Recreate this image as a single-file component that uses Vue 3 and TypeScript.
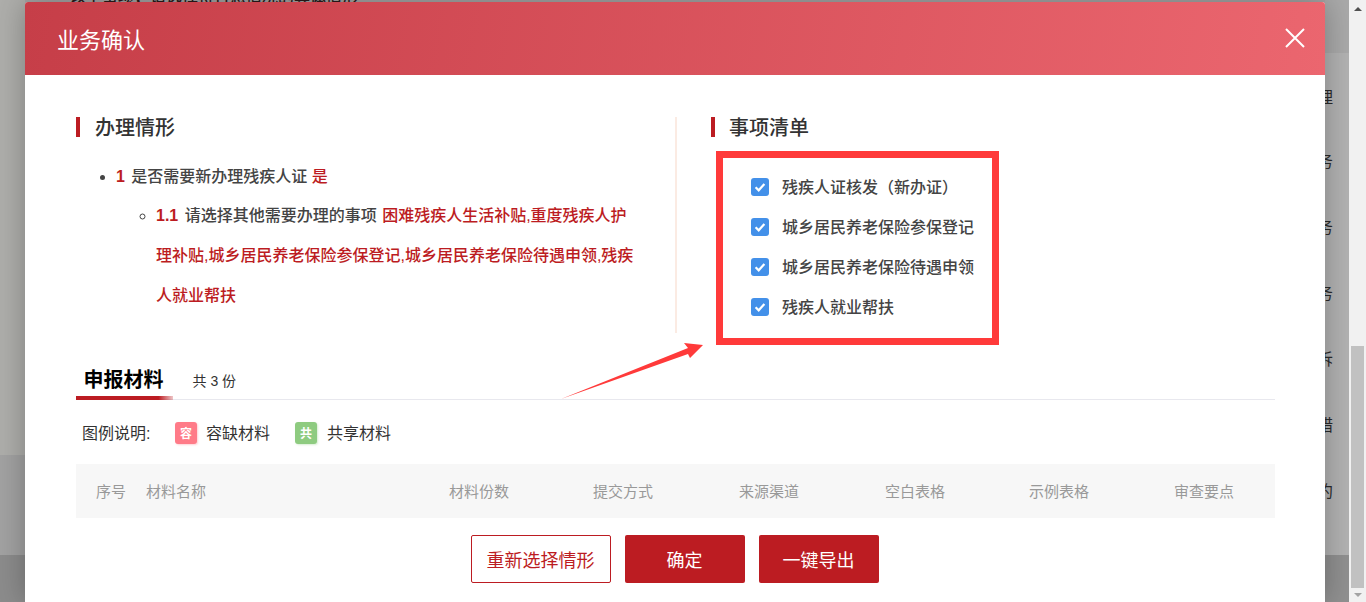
<script setup lang="ts">
const subAnswer = '困难残疾人生活补贴,重度残疾人护理补贴,城乡居民养老保险参保登记,城乡居民养老保险待遇申领,残疾人就业帮扶'
const items: string[] = ['残疾人证核发（新办证）', '城乡居民养老保险参保登记', '城乡居民养老保险待遇申领', '残疾人就业帮扶']
const columns: string[] = ['材料份数', '提交方式', '来源渠道', '空白表格', '示例表格', '审查要点']
const fragments: string[] = ['理', '务', '务', '务', '诉', '措', '约']
</script>

<template>
  <div class="page">
    <div class="stage">
      <div class="backdrop">
        <div class="side left">
          <div class="band lb1"></div>
          <div class="band lb2"></div>
          <div class="band lb3"></div>
        </div>
        <div class="middle">
          <p class="behind">以下事项，请选择符合您情况的具体情形</p>
        </div>
        <div class="side right">
          <div class="rb1"></div>
          <div class="rb2">
            <div v-for="(f, i) in fragments" :key="i" class="frag">{{ f }}</div>
          </div>
          <div class="band rb3"></div>
        </div>
      </div>

      <div class="modal">
        <header class="head">
          <h1>业务确认</h1>
          <svg class="close" width="22" height="22" viewBox="0 0 22 22" aria-label="关闭">
            <path d="M2 2 L20 20 M20 2 L2 20" stroke="#fff" stroke-width="2" fill="none" />
          </svg>
        </header>

        <div class="body">
          <div class="top">
            <section class="situation">
              <h2 class="sec">办理情形</h2>
              <ul class="l1">
                <li>
                  <b class="num">1</b> 是否需要新办理残疾人证 <span class="ans">是</span>
                  <ul class="l2">
                    <li><b class="num">1.1</b> 请选择其他需要办理的事项 <span class="ans sub">{{ subAnswer }}</span></li>
                  </ul>
                </li>
              </ul>
            </section>
            <section class="list">
              <h2 class="sec">事项清单</h2>
              <div class="checks">
                <label v-for="it in items" :key="it" class="check">
                  <svg class="cb" width="18" height="18" viewBox="0 0 18 18">
                    <rect width="18" height="18" rx="3" fill="#4390e9" />
                    <path d="M4.6 9.2 L7.7 12.3 L13.4 6" stroke="#fff" stroke-width="2.2" fill="none" />
                  </svg>
                  <span>{{ it }}</span>
                </label>
              </div>
            </section>
          </div>

          <div class="tabs">
            <div class="tab">申报材料</div>
            <div class="count">共 3 份</div>
            <div class="tab-line"></div>
          </div>

          <div class="legend">
            <span class="legend-title">图例说明:</span>
            <span class="tag pink">容</span><span class="legend-name first">容缺材料</span>
            <span class="tag green">共</span><span class="legend-name">共享材料</span>
          </div>

          <div class="thead">
            <span>序号</span>
            <span>材料名称</span>
            <span v-for="c in columns" :key="c" class="c">{{ c }}</span>
          </div>

          <div class="actions">
            <button class="btn ghost">重新选择情形</button>
            <button class="btn solid">确定</button>
            <button class="btn solid">一键导出</button>
          </div>
        </div>

        <div class="mark-box"></div>
        <svg class="mark-arrow" width="150" height="60" viewBox="0 0 150 60">
          <polygon points="1,57 128,6 124,1 143,3 130,16 128,12" fill="#ff3a3a" />
        </svg>
      </div>
    </div>

    <div class="scrollbar">
      <div class="sb-btn"><i class="up"></i></div>
      <div class="sb-space"></div>
      <div class="sb-thumb"></div>
      <div class="sb-btn end"><i class="down"></i></div>
    </div>
  </div>
</template>

<style>
html, body { margin: 0; overflow: hidden; background: #fff; }
</style>

<style scoped>
.page {
  display: flex;
  width: 1366px;
  height: 602px;
  overflow: hidden;
  font-family: "Liberation Sans", "Noto Sans CJK SC", sans-serif;
  color: #333;
}
.stage { position: relative; width: 1349px; height: 602px; overflow: hidden; flex: none; }
.backdrop { display: flex; height: 602px; }
.side { display: flex; flex-direction: column; flex: none; }
.left { width: 25px; }
.right { width: 24px; }
.band { flex: none; }
.lb1 { height: 455px; background: #aeaeab; }
.lb2 { height: 100px; background: #a2a2a2; }
.lb3 { height: 47px; background: #8c8c8c; }
.middle { width: 1300px; flex: none; background: #a3a3a3; }
.behind {
  margin: -10px 0 0;
  padding-left: 45px;
  font-size: 16px;
  line-height: 16px;
  color: #2a1a1a;
  font-weight: 500;
}
.rb1 { height: 53px; flex: none; background: #a9a9a9; }
.rb2 { height: 502px; flex: none; padding-top: 10px; box-sizing: border-box; background: #b2b2b2; }
.rb3 { height: 47px; background: #909090; }
.frag {
  height: 66px;
  line-height: 66px;
  margin-left: -8px;
  font-size: 16px;
  color: #2a2a2a;
}
.frag:first-child { margin-top: 2px; margin-bottom: -2px; }

.modal {
  position: absolute;
  left: 25px;
  top: 2px;
  width: 1300px;
  height: 600px;
  background: #fff;
  border-radius: 3px 3px 0 0;
  box-shadow: 0 0 30px rgba(0, 0, 0, 0.28);
}
.head {
  height: 73px;
  display: flex;
  align-items: center;
  justify-content: space-between;
  padding: 0 19px 0 32px;
  border-radius: 3px 3px 0 0;
  background: linear-gradient(100deg, #c63e48 0%, #eb666f 100%);
}
.head h1 {
  margin: 0 0 2px;
  font-size: 22px;
  font-weight: 400;
  color: #fff;
}
.close { margin-bottom: 2px; }

.body { padding: 42px 50px 0 51px; }
.top { display: flex; height: 216px; }
.situation {
  width: 601px;
  flex: none;
  box-sizing: border-box;
  border-right: 2px solid #fbebe3;
  padding-right: 37px;
}
.list { padding-left: 34px; }
.list .sec { padding-left: 14px; }
.sec {
  margin: 0;
  height: 20px;
  line-height: 22px;
  border-left: 4px solid #bc1c22;
  padding-left: 15px;
  font-size: 20px;
  font-weight: 500;
  color: #333;
}
.l1 { margin: 20px 0 0; padding: 0 0 0 40px; list-style: disc; }
.l2 { margin: -1px 0 0; padding: 0 0 0 40px; list-style: circle; }
li { font-size: 16px; line-height: 40px; font-weight: 500; color: #444; }
.num { color: #bc1c22; font-weight: 700; margin-right: 2px; }
.ans { color: #bc1c22; }
.ans.sub { margin-left: 1px; }

.checks { display: flex; flex-direction: column; margin: 30px 0 0 5px; padding-left: 35px; }
.check {
  display: flex;
  align-items: center;
  gap: 13px;
  height: 40px;
  font-size: 16px;
  font-weight: 500;
  color: #444;
}
.check span { margin-bottom: 2px; }
.cb { flex: none; }

.tabs {
  position: relative;
  display: flex;
  align-items: flex-end;
  height: 67px;
  border-bottom: 1px solid #e8e8ee;
  box-sizing: border-box;
}
.tab {
  font-size: 20px;
  font-weight: 700;
  color: #000;
  line-height: 20px;
  margin: 0 0 9px 7.5px;
}
.count { font-size: 14px; line-height: 14px; margin: 0 0 11px 29px; color: #333; }
.tab-line {
  position: absolute;
  left: 0;
  bottom: -1px;
  width: 97px;
  height: 4px;
  background: linear-gradient(90deg, #bc1c22 85%, rgba(188, 28, 34, 0.25) 100%);
}

.legend { display: flex; align-items: center; height: 64px; color: #333; padding-top: 1px; box-sizing: border-box; }
.legend-title { margin: 0 0 2px 6px; font-size: 16px; width: 93px; flex: none; }
.legend-name { font-size: 16px; margin: 0 0 2px 10px; }
.legend-name.first { margin: 0 25px 2px 9px; }
.tag {
  width: 22px;
  height: 22px;
  border-radius: 3px;
  display: flex;
  align-items: center;
  justify-content: center;
  font-size: 12px;
  font-weight: 700;
  color: #fff;
}
.pink { background: #ff7b88; box-shadow: 1px 1px 2px rgba(255, 123, 136, 0.35); }
.green { background: #8ecb80; box-shadow: 1px 1px 2px rgba(142, 203, 128, 0.35); }

.thead {
  display: grid;
  grid-template-columns: 50px 260.5px 145px 143px 149px 143px 145px 145px;
  align-items: center;
  height: 54px;
  padding: 0 0 2px 20px;
  box-sizing: border-box;
  background: #f7f7f7;
  font-size: 15px;
  color: #999;
}
.c { text-align: center; }

.actions { display: flex; justify-content: center; gap: 14px; margin: 17px 0 0 -2px; }
.btn {
  height: 48px;
  width: 120px;
  border-radius: 2px;
  font-family: inherit;
  font-size: 18px;
  cursor: pointer;
  box-sizing: border-box;
}
.ghost { width: 140px; background: #fff; color: #bc1c22; border: 1px solid #bc1c22; }
.solid { background: #bc1c22; color: #fff; border: none; }

.mark-box {
  position: absolute;
  left: 691px;
  top: 149px;
  width: 283px;
  height: 194px;
  box-sizing: border-box;
  border: 7px solid #ff3a3a;
}
.mark-arrow { position: absolute; left: 535px; top: 340px; }

.scrollbar { width: 17px; flex: none; display: flex; flex-direction: column; background: #f1f1f1; }
.sb-btn { height: 17px; display: flex; align-items: center; justify-content: center; flex: none; }
.sb-btn.end { height: 14px; }
.sb-space { flex: 1; }
.sb-thumb { height: 242px; margin: 0 2px; background: #c1c1c1; flex: none; }
.up { width: 0; height: 0; border: 4px solid transparent; border-top: 0; border-bottom: 4px solid #505050; }
.down { width: 0; height: 0; border: 4px solid transparent; border-bottom: 0; border-top: 4px solid #a3a3a3; }
</style>
